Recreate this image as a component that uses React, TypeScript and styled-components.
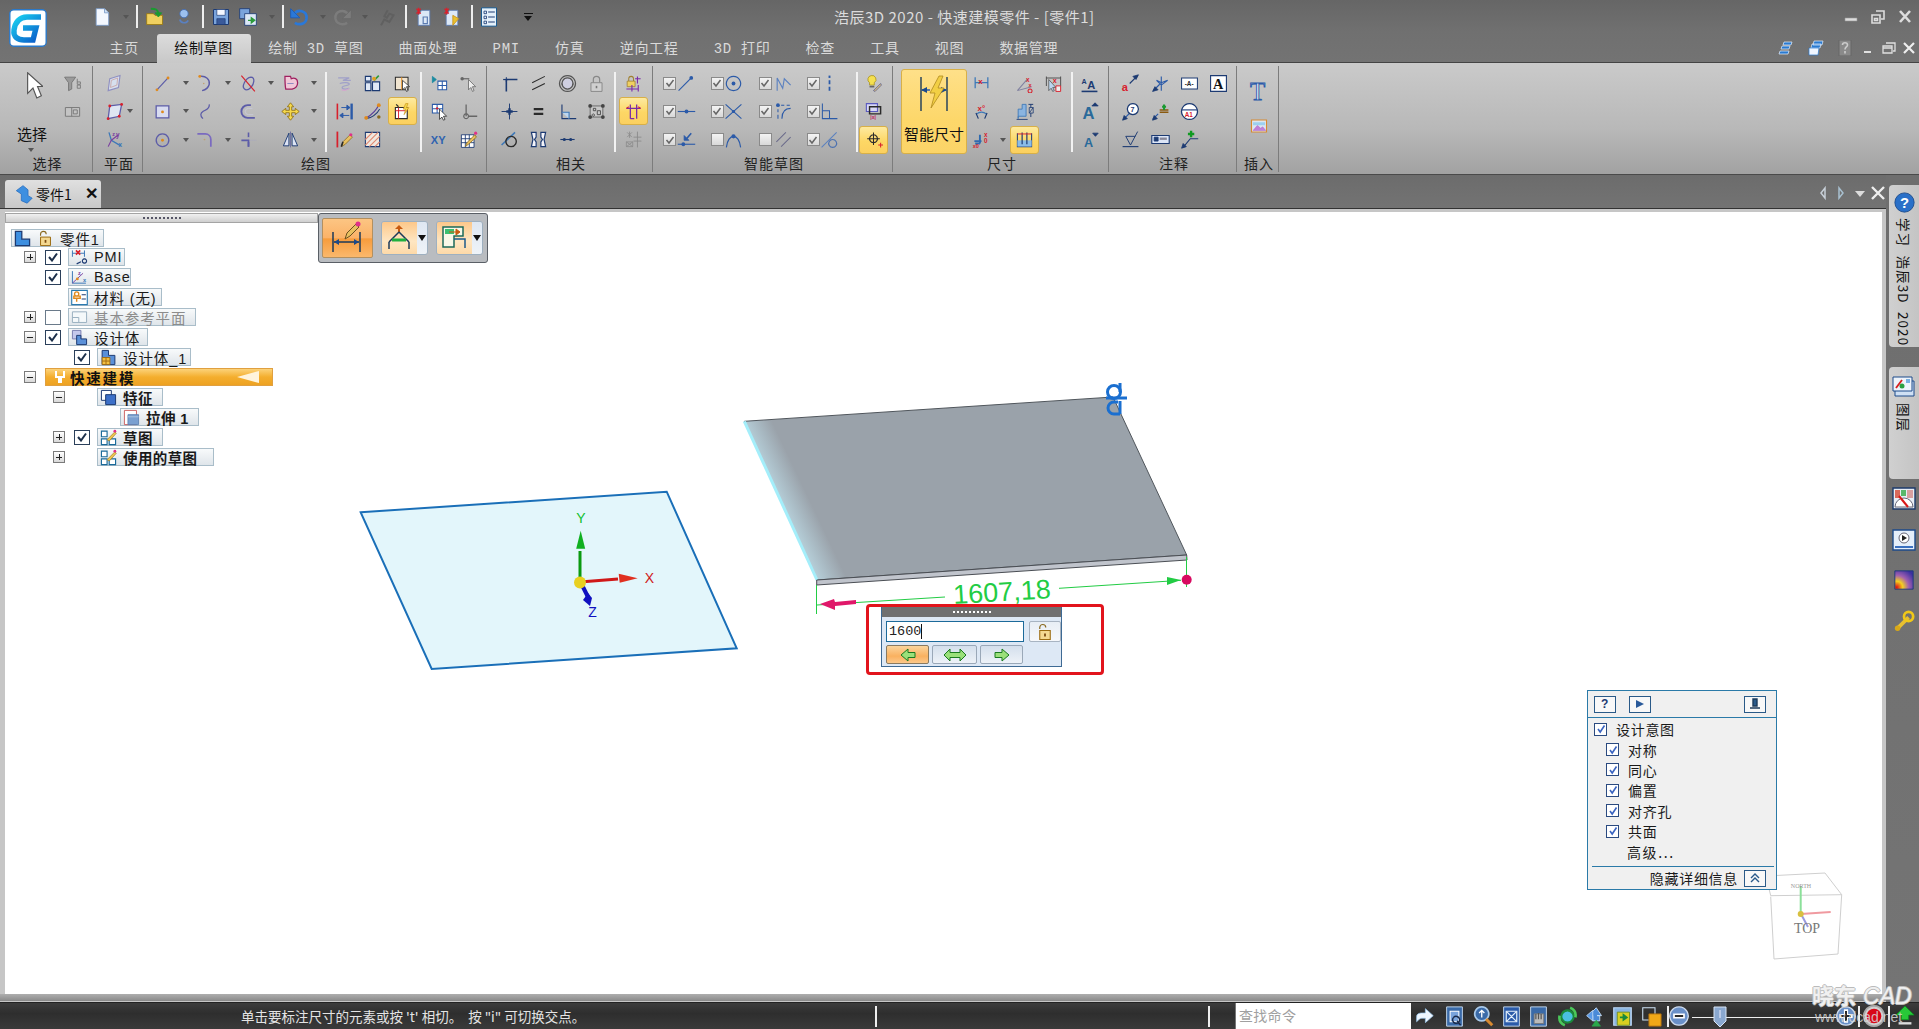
import React from 'react';
import styled, { createGlobalStyle } from 'styled-components';

const CJK = '"Noto Sans CJK SC", "Liberation Sans", sans-serif';
const B = '#2b5aa8', N = '#1c3a72', P = '#5c5ca8', O = '#e08a1e', R = '#d8202c', G = '#2f9a3a', K = '#2a2a2a', T = '#3d78b8';

const L = (d: string, c = P, w = 1.6, f = 'none') => <path d={d} stroke={c} strokeWidth={w} fill={f} />;
const Dot = (x: number, y: number, c = O, r = 1.8) => <circle cx={x} cy={y} r={r} fill={c} />;
const Tx = (x: number, y: number, s: string, c = R, z = 7) => (
  <text x={x} y={y} fontSize={z} fontFamily="Liberation Sans" fontWeight="700" fill={c}>{s}</text>
);

const icons: Record<string, React.ReactNode> = {
  filter: <>{L('M2 4h14l-5 7v8l-4 2V11z', '#777', 1.2, '#9a9a9a')}{L('M18 6v4M18 14h4v4h-4zM18 10h4v3h-4z', '#777', 1.1)}</>,
  selbox: <>{L('M3 7h18v11H3z', '#777', 1.2, '#c4c4c4')}{L('M11 7v11M13 10h5v5h-5z', '#777', 1.2)}</>,
  plane: <>{L('M6 6l13-4-2 15-13 4z', '#8f8fc0', 1.4, '#d6dfee')}{L('M8 8l8-3-1 9-8 3z', '#c9a0a0', 1, 'none')}</>,
  plane2: <>{L('M6 5l15-2-3 15-14 3z', P, 1.6, '#dfe6f2')}{Dot(6, 5, R, 1.8)}{Dot(21, 3, R, 1.8)}{Dot(18, 18, R, 1.8)}{Dot(4, 21, R, 1.8)}</>,
  csys: <>{L('M5 3l3 10 12 7', T, 1.6)}{L('M8 13l-4 8M8 13l9-7', '#7a3ea0', 1.4)}{Tx(14, 9, 'y', '#7a3ea0', 8)}{Tx(9, 8, 'z', '#7a3ea0', 7)}{Tx(17, 22, 'x', T, 8)}</>,
  line: <>{L('M5 20L19 5', P, 1.5)}{Dot(5, 20)}{Dot(19, 5)}</>,
  rect: <>{L('M4 5h16v15H4z', P, 1.6, '#d8dcf0')}{Dot(12, 12.5)}</>,
  circle: <>{L('M12 5a8 8 0 1 0 .01 0', P, 1.5)}{Dot(12, 13)}</>,
  arc: <>{L('M6 3c8-1 13 4 12 10-1 4-4 7-9 8', P, 1.8)}{Dot(6, 3)}{Dot(11, 12, '#c0a070', 1)}</>,
  spline: <>{L('M18 3c1 6-5 7-8 9s-4 5 0 9', P, 1.6)}</>,
  fillet: <>{L('M3 5h10c4 0 7 3 7 7v9', '#7a6ac0', 2.2)}{Dot(12, 12, '#c0a070', 1.1)}</>,
  trim: <>{L('M7 19c-4-3 1-14 8-15 6 0 4 9 0 13-3 3-6 4-8 2z', P, 1.6)}{L('M3 2l17 20', R, 1.5)}</>,
  offsetc: <>{L('M15 4H11a8 8 0 0 0 0 16h9', P, 2.4)}{L('M17 8h-5a4 4 0 0 0 0 8h6', '#c8c8d8', 1.2)}</>,
  extend: <>{L('M12 3v6M12 15v6', P, 2)}{L('M3 13h9v8', P, 2.2)}{L('M14 13h8M12 11v-2', '#aab', 1, 'none')}</>,
  heart: <>{L('M5 3h7l1 3c4-2 8 0 8 5 0 4-3 7-7 8H6c-1-5-1-11-1-16z', '#a02060', 1.6, '#f0c8d8')}{L('M8 12h8', '#8888c0', 1.2)}</>,
  move: <>{L('M12 1l4 5h-2.5v4.5H18V8l5 4-5 4v-2.5h-4.5V18H16l-4 5-4-5h2.5v-4.5H6V16l-5-4 5-4v2.5h4.5V6H8z', '#8a6a10', 1, '#f5d84a')}</>,
  mirror: <>{L('M10 4L3 20h7zM14 4l7 16h-7z', N, 1.2, '#dde4f4')}{L('M12 2v20', '#7070a0', 1.2)}</>,
  symm: <>{L('M4 5h14l-8 3h10M6 12c6-2 12-1 12 1s-9 1-9 4 7 2 9 1', '#a0a0c8', 1.5)}{L('M8 20c3 1 7 1 10-2', '#d8a0d0', 1.2)}</>,
  intel: <>{L('M3 3h7v6H3zM3 11h7v10H3zM12 10h9v11h-9z', N, 1.4, '#dfe8f6')}{L('M14 8l6-6', G, 2)}{Dot(14, 6, '#e0a020', 2.4)}</>,
  boxcur: <>{L('M3 4h16v16H3z', K, 1.3, '#f0e4d0')}{L('M11 4v16', O, 1.2)}{L('M12 8v12l3-3 2 5 2-1-2-5h4z', K, 1, '#fff')}</>,
  dist: <>{L('M3 2v20', R, 2)}{L('M21 2v20', B, 3)}{L('M8 7h7M15 4l4 3-4 3z', B, 1.2, B)}{L('M10 17h8M10 14l-4 3 4 3z', B, 1.2, B)}</>,
  curve: <>{L('M3 21C8 18 17 12 20 3', '#5a3e9a', 1.6)}{L('M4 21c6 0 14-6 17-12', N, 1.4)}{Dot(4, 20, O, 2.4)}{Dot(20, 4, O, 2.4)}{Dot(20, 19, '#8a6a20', 2.2)}</>,
  flash: <>{L('M3 7h15v14H3z', K, 1.4, '#fff')}{L('M7 7v14M3 11h15', R, 1.2)}{L('M16 2l-3 7h3l-2 7 6-9h-3l2-5z', '#c89018', .8, '#f5d84a')}{L('M4 3l3 3', K, 1.5)}</>,
  pencil: <>{L('M3 2v20', R, 2.2)}{L('M8 21l2-6 9-9 3 3-9 9z', '#8a6a20', 1, '#e8c060')}{Dot(20, 6, '#e0308a', 2)}{L('M8 21l2-6', K, 2)}</>,
  hatch: <>{L('M3 3h18v18H3z', N, 1.3, '#f0e8e0')}{L('M3 12l9-9M3 19L19 3M8 21L21 8M15 21l6-6', '#e08870', 1.4)}</>,
  gridtri: <>{L('M10 9h11v11H10zM15.5 9v11M10 14.5h11', B, 1.3, '#fff')}{L('M3 3l5 4-5 4z', '#1a8aa0', 1, '#1a8aa0')}</>,
  linkcur: <>{L('M3 6h10', '#666', 1.5)}{Dot(4, 6, '#666', 2.2)}{L('M12 7l0 13 3-3 2 5 2-1-2-5h4z', '#666', 1, '#eee')}</>,
  gridcur: <>{L('M3 3h13v11H3zM9 3v11M3 8.5h13', B, 1.3, '#fff')}{Dot(9, 8, R, 1.5)}{L('M12 9v13l3-3 2 4 2-1-2-4h4z', K, 1, '#fff')}</>,
  laxis: <>{L('M9 3v15M12 18h11', '#666', 1.6)}{L('M9 15a3 3 0 1 0 .01 0', '#666', 1.5)}</>,
  xy: <>{Tx(1, 18, 'XY', '#2f63b0', 14)}</>,
  tablep: <>{L('M3 6h16v16H3zM8 6v16M13 6v16M3 11h16M3 16h16', N, 1.1, '#fff')}{L('M8 21l2-5 10-10 2 3-10 9z', '#8a6a20', 1, '#e8c060')}{Dot(21, 4, '#e0308a', 2)}</>,
  corner: <>{L('M8 22V7h14', N, 2)}{L('M8 4v6', N, 1.2)}{L('M4 7h6', N, 1.5)}</>,
  cross: <>{L('M12 2v20M2 12h20', N, 1.2)}{L('M12 8v8M8 12h8', N, 3)}</>,
  parallel: <>{L('M4 11L20 3M4 20l16-8', K, 1.3)}</>,
  equal: <>{L('M6 9h12M6 15h12', K, 2.6)}</>,
  concentric: <>{L('M12 2a10 10 0 1 0 .01 0', '#555', 1.6)}{L('M12 5a7 7 0 1 0 .01 0', '#555', 1.6, '#cfcfe0')}</>,
  perp: <>{L('M5 3v18h18', N, 1.4)}{L('M5 13h9v8', T, 1.4, '#bcd6f0')}</>,
  lock: <>{L('M8 11V7a4 4 0 0 1 8 0v4', '#888', 1.5)}{L('M5 11h14v11H5z', '#888', 1.2, '#cfcfcf')}{L('M12 15v3', '#777', 2)}</>,
  rigid: <>{L('M4 5h16v14H4z', '#555', 1, '#c8c8c8')}{Dot(4, 5, '#444', 2.4)}{Dot(20, 5, '#444', 2.4)}{Dot(4, 19, '#444', 2.4)}{Dot(20, 19, '#444', 2.4)}{L('M8 8h3v3H8zM13 11h4v5h-4zM8 15a1.5 1.5 0 1 0 .01 0', '#444', 1.1)}</>,
  tangent: <>{L('M2 19L19 3', T, 2)}{L('M14 8a6.5 6.5 0 1 0 .01 0', K, 1.7)}</>,
  symbr: <>{L('M3 3h6v6l-2 3 2 3v6H3l2-9zM21 3h-6v6l2 3-2 3v6h6l-2-9z', N, 1.5, '#f4f4fa')}</>,
  collin: <>{L('M3 12h18', N, 1.4)}{Dot(8, 12, N, 2)}{Dot(16, 12, N, 2)}</>,
  lockdim: <>{L('M6 9V6a3 3 0 0 1 6 0v3', '#a08030', 1.3)}{L('M4 9h10v7H4z', '#a08030', 1, '#f0d060')}{L('M14 6h7M17 3v9M3 19h15M10 14v8M18 14v8', '#7a2aa8', 1.4)}</>,
  dimrel: <>{L('M3 8h18M8 3v10M16 3v10M8 13v8M8 21h5M16 13v8', '#7a2aa8', 1.6)}{L('M3 8l3-2M21 8l-3-2', R, 1.3)}</>,
  faint: <>{L('M17 2v20M12 9h10M12 14h10', '#8a8a8a', 1.1)}{L('M4 3l6 6M10 3L4 9M7 2v8M3 15h8v6H3zM3 15l8 6M11 15l-8 6', '#8a8a8a', 1)}</>,
  sline: <>{L('M2 21L18 5', B, 1.4)}{Dot(18, 5, B, 2.4)}</>,
  sdot: <>{L('M12 3a9 9 0 1 0 .01 0', B, 1.5)}{Dot(12, 12, B, 2.4)}</>,
  swave: <>{L('M4 21V5l7 13 2-12 8 8', '#5a80c0', 1.4)}</>,
  sbar: <>{L('M12 2v3', B, 2.4)}{L('M12 8v5M12 16v5', B, 2.2)}</>,
  smid: <>{L('M1 12h22', B, 1.4)}{Dot(12, 12, B, 2.4)}</>,
  sx: <>{L('M2 3l20 18M22 3L2 21', B, 1.4)}{Dot(12, 12, B, 2)}</>,
  sarc: <>{Dot(5, 4, B, 2.4)}{L('M9 4h4M16 4h4M5 9v4M5 16v5', B, 1.3)}{L('M21 8c-7 0-11 5-11 13', B, 1.4)}</>,
  sl: <>{L('M3 2v19h19', B, 1.3)}{L('M3 11h9v10', B, 1.3)}</>,
  sdown: <>{L('M1 18h22', B, 1.4)}{Dot(8, 18, B, 2.4)}{L('M18 4l-6 7', B, 2)}{L('M9 7v6h6z', B, 1, B)}</>,
  sup: <>{L('M3 22c1-9 5-14 9-14s8 5 9 14', B, 1.5)}{Dot(12, 8, B, 2.6)}</>,
  spar: <>{L('M3 15L15 3M9 21L21 9', '#6a6a8a', 1.3)}</>,
  scirc: <>{L('M2 22L21 3', '#5a80c0', 1.3)}{L('M16 12a5 5 0 1 0 .01 0', '#4a70b0', 1.4)}</>,
  bulb: <>{L('M9 2a5 5 0 0 1 4 9v3H7v-3A5 5 0 0 1 9 2z', '#a89020', 1, '#f5e050')}{L('M7 16h6', '#666', 2)}{L('M12 21l9-9 1 2-8 8z', '#5a5a8a', 1, '#d8c080')}</>,
  relbox: <>{L('M3 2h14v10H3z', '#5a5ac0', 1.4, '#d8d8f4')}{L('M7 6h14v9H7z', K, 1.8)}{Tx(8, 22, '|x|', '#c02060', 6.5)}</>,
  cross2: <>{L('M12 3v16M4 11h16', K, 1.3)}{L('M12 6a5 5 0 1 0 .01 0', K, 1.5)}{L('M18 19h6M21 16v6', R, 1.3)}</>,
  dimx: <>{L('M4 4v14M20 4v14M4 11h16', T, 1.6)}{Tx(8, 12, 'x', R, 10)}</>,
  dimrr: <>{L('M3 21l18-5M3 21l12-14', '#8080a0', 1.3)}{Tx(14, 10, 'x', R, 8)}{Tx(17, 16, 'x', R, 7)}{L('M19 19a2.5 2.5 0 1 0 .01 0', R, 1.3)}</>,
  dimcur: <>{L('M3 5h18M3 3v12M21 3v12', '#555', 1.3)}{Tx(11, 11, 'x', R, 9)}{L('M6 7v14l3-3 2 4 2-1-2-4h4z', '#555', 1, '#bcd6f0')}{L('M15 15h6v7h-6z', R, 1.2, '#eee')}</>,
  angle: <>{L('M6 15a9 9 0 0 1 12 0', T, 1.6)}{L('M5 14l3 7M19 14l-3 7', N, 1.5)}{Tx(7, 11, 'x°', R, 10)}</>,
  step: <>{L('M4 21V9h5V3h5v15H4z', T, 1.1, '#8ab4e0')}{L('M17 3h6M20 3v4M20 14v5', N, 1.2)}{L('M18 7h5v7h-5zM18 14l5-7', N, 1)}{L('M2 22h14', N, 1.1)}</>,
  axial: <>{L('M3 14h9M10 6v11M10 17h-6', '#2f6ab0', 2.4)}{Tx(15, 9, 'x', R, 8)}{Tx(15, 17, '0', R, 8)}{Tx(1, 23, 'x0', R, 7)}</>,
  water: <>{L('M3 4v17h18V4', N, 1.3)}{L('M3 13h18v8H3z', 'none', 0, '#8abce8')}{L('M9 3v15M15 3v15', N, 1.5)}{L('M3 5h18', R, 1.2)}</>,
  textu: <>{Tx(2, 12, 'A', N, 9)}{Tx(9, 19, 'A', N, 14)}{L('M2 22h20', N, 2)}</>,
  aup: <>{Tx(3, 22, 'A', '#2a6a9a', 21)}{L('M19 1l4 4h-8z', N, 1, N)}</>,
  adown: <>{Tx(5, 22, 'A', '#2a6a9a', 16)}{L('M16 4h7l-3.5 4z', N, 1, N)}</>,
  anote: <>{Tx(1, 21, 'a', R, 14)}{L('M11 12l10-10', N, 1.4)}{L('M22 1l-7 2 4 4z', N, 1, N)}</>,
  arrowT: <>{L('M3 21l8-8', B, 1.6)}{L('M2 22l7-2-4-4z', N, 1, N)}{L('M13 3v18M7 8l6 3 8-3-8 6z', B, 1.4)}</>,
  boxA: <>{L('M2 5h20v14H2z', N, 1.3, '#fff')}{Tx(6, 15, '-A-', K, 8)}</>,
  bigA: <>{L('M2 2h20v20H2z', N, 1.4, '#fff')}<text x="5" y="19" fontSize="18" fontFamily="Liberation Serif" fontWeight="700" fill="#111">A</text></>,
  bal: <>{L('M3 22l8-8', B, 1.6)}{L('M2 23l6-2-4-4z', N, 1, N)}{L('M15 2a7 7 0 1 0 .01 0', N, 1.5, '#fff')}{Tx(12, 13, '7', N, 9)}</>,
  datum: <>{L('M2 22l7-7', B, 1.6)}{L('M2 23l6-2-4-4z', N, 1, N)}{L('M11 13h11M11 10h11', '#8a5a10', 2)}{L('M14 6h5M16.5 3v7', '#1a9a30', 2.6)}</>,
  a1: <>{L('M12 2a10 10 0 1 0 .01 0', N, 1.6, '#fff')}{L('M2 10h20', '#1a3a7a', 1.4)}{Tx(6, 19, 'A1', R, 8)}</>,
  finish: <>{L('M2 21h20', N, 1.4)}{L('M6 8l6 11 9-17M6 8h12', N, 1.2)}</>,
  frame: <>{L('M1 7h22v10H1z', N, 1.4, '#dce6f8')}{L('M4 9h5v5H4z', N, 1, N)}{L('M11 11h9', '#889', 3)}</>,
  leader: <>{L('M4 22L13 11h10', N, 1.4)}{L('M2 23l6-2-4-4z', N, 1, N)}{L('M10 5h8M14 1v8', '#0f9a20', 3)}</>,
  bigT: <><text x="3" y="22" fontSize="25" fontFamily="Liberation Serif" fill="#dce8f6" stroke="#2b5aa8" strokeWidth=".9">T</text></>,
  picture: <>{L('M2 4h20v16H2z', '#d88a30', 1.5, '#dce6f0')}{L('M4 18l6-7 4 4 3-2 4 5z', '#a050c0', .5, '#c080d8')}{L('M4 7h16v4H4z', 'none', 0, '#9cd0f0')}</>,
  qnew: <>{L('M5 2h10l5 5v15H5z', '#7a9ac8', 1, '#f4f8ff')}{L('M15 2v5h5', '#7a9ac8', 1, '#cfe0f4')}</>,
  qopen: <>{L('M2 8h8l2 2h9v11H2z', '#9a7a10', 1, '#f0d060')}{L('M7 2c6 0 9 1 9 7', '#1a9a30', 2.4)}{L('M12 7l4 5 4-5z', '#1a9a30', 1, '#1a9a30')}</>,
  qfind: <>{L('M12 3a5 5 0 1 0 .01 0', '#4a70b0', 1.2, '#9cc0ee')}{L('M7 15c1 5 8 5 10 1', '#5a80c0', 2)}</>,
  qsave: <>{L('M3 3h18v18H3z', N, 1.2, '#7aa4dc')}{L('M7 3h10v7H7z', N, .8, '#f4f8ff')}{L('M7 14h10v7H7z', N, .8, '#3a5a9a')}</>,
  qsaves: <>{L('M2 2h12v12H2z', N, 1, '#7aa4dc')}{L('M8 8h14v14H8z', N, 1, '#dce8f6')}{L('M12 16h6M16 13l4 3-4 3z', '#2a9a3a', 1.6, '#2a9a3a')}</>,
  qundo: <>{L('M6 9c4-7 16-5 15 5-1 7-9 8-14 5', '#2a78d8', 3.2)}{L('M2 2v11h11z', '#1a5ab8', 1, '#2a78d8')}</>,
  qredo: <>{L('M18 9C14 2 2 4 3 14c1 7 9 8 14 5', '#7c7c7c', 3)}{L('M22 3v11H11z', '#686868', 1, '#7c7c7c')}</>,
  qsteps: <>{L('M6 22l4-7 6 3 5-8-5-2-3 5-3-2 4-7', '#606060', 2.4)}</>,
  qa: <>{L('M9 4h10v18H5V10z', '#5a7ab0', 1, '#dce8f6')}{L('M3 2l5 6M8 2l-5 6M5.5 1v8', R, 1.6)}{L('M11 12h5v8h-5z', '#5a7ab0', 1.4)}</>,
  qb: <>{L('M9 4h10v18H5V10z', '#5a7ab0', 1, '#dce8f6')}{L('M3 2l5 6M8 2l-5 6M5.5 1v8', R, 1.6)}{L('M13 10l7 4-7 8z', '#c89018', 1, '#e8c030')}</>,
  qlist: <>{L('M3 1h18v22H3z', '#1a5a90', 1.2, '#e4f0fa')}{L('M6 5h3v3H6zM6 11h3v3H6zM6 17h3v3H6z', N, 1)}{L('M11 6h8M11 12h8M11 18h8', N, 1.4)}</>,
  stArrow: <>{L('M3 12c0-3 3-4 6-4h4V3l9 8-9 8v-5H9c-2 0-4 2-6 4z', '#9ac8f0', .8, '#eef6ff')}</>,
  stFit: <>{L('M3 1h18v22H3z', '#cfe4f8', 1, '#3a6aa8')}{L('M7 6h10v12H7z', '#fff', 1.2, '#7aa4dc')}{L('M11 13a4 4 0 1 0 .01-.01M15 17l4 5', '#1a2a4a', 1.6)}</>,
  stZoom: <>{L('M10 1a8 8 0 1 0 .01 0', '#a8c8e8', 2, '#3a6aa8')}{L('M15 15l7 7', '#d88a30', 3.4)}{L('M10 5v8M7 8l3-3 3 3', '#fff', 1.5)}</>,
  stArea: <>{L('M3 1h18v22H3z', '#cfe4f8', 1, '#2a5aa8')}{L('M7 7l10 10M17 7L7 17M6 6h12v12H6z', '#e4f0fa', 1.4)}</>,
  stPan: <>{L('M3 1h18v22H3z', '#cfe4f8', 1, '#3a6aa8')}{L('M7 9h11v11H7z', '#777', 1, '#bbb')}{L('M9 9v6M12 8v7M15 9v6', '#555', 1.4)}</>,
  stOrbit: <>{L('M12 5a7 7 0 1 0 .01 0', '#1a8a3a', 2.4, '#4ac0e0')}{L('M15 2c5 2 7 6 6 11M9 22C4 20 2 16 3 11', '#4ac85a', 3)}</>,
  stView: <>{L('M14 2L5 11h5v6h8v-6h-3l5 0z', '#c8e0f8', 1, '#4a8ad8')}{L('M3 11l7-6v12z', '#bcd6f4', 1, '#5a9ae8')}{L('M14 16l5 7h-10z', '#2aa84a', .6, '#2aa84a')}</>,
  stLayer: <>{L('M2 2h20v20H2z', '#bcd6f4', 1.4, '#8ab4e0')}{L('M6 7h14v15H6z', '#6a8a20', 1, '#d8d020')}{L('M9 13h6M13 10l4 3-4 3z', '#1a8a3a', 1.8, '#1a8a3a')}</>,
  stColor: <>{L('M2 2h14v14H2z', '#cfe4f8', 1.2, 'none')}{L('M9 9h14v14H9z', '#a86a10', 1, '#f0a818')}</>,
  stMinus: <>{L('M12 1a11 11 0 1 0 .01 0', '#cfdcee', 1.6, '#6a90c8')}{L('M5 9h14v6H5z', '#fff', 0, '#fff')}{L('M7 12h10', K, 2.4)}</>,
  stPlus: <>{L('M12 1a11 11 0 1 0 .01 0', '#cfdcee', 1.6, '#6a90c8')}{L('M12 4v16M4 12h16', '#fff', 5)}{L('M12 6v12M6 12h12', K, 2.4)}</>,
  stRec: <>{L('M12 1a11 11 0 1 0 .01 0', '#a8a8a8', 2, '#d0d0d0')}<circle cx="12" cy="12" r="8" fill="#d80818" /></>,
  stUp: <>{L('M12 1L2 11h6v5h8v-5h6z', '#0a8a20', .8, '#28c838')}{L('M5 20h14', '#ddd', 2.6)}</>,
  tPart: <>{L('M2 2h9v11h11v9H2z', N, 1.8, '#3d8fe0')}</>,
  tLock: <>{L('M5 8V6a4 4 0 0 1 8 0', '#8a6a20', 1.6)}{L('M5 10h14v12H5z', '#9a6a10', 1.4, '#f4d890')}{L('M12 14v4', '#7a4a10', 2.4)}</>,
  tPmi: <>{L('M2 2v9M19 2v9M2 6h17', T, 1.4)}{L('M7 2l6 6M13 2L7 8', R, 2.4)}{L('M19 14a3 3 0 1 0 .01 0M14 18l-6 3', N, 1.6)}</>,
  tBase: <>{L('M2 3v17h19', T, 1.4)}{L('M2 20l15-14', '#7a3ea0', 1.3)}{Tx(10, 8, 'z', '#7a3ea0', 8)}{Tx(17, 18, 'x', T, 8)}{Dot(9, 14, O, 2)}</>,
  tMat: <>{L('M1 2h22v20H1z', '#2a7ab0', 1.6, '#fff')}{L('M8 4a3 3 0 1 0 .01 0M4 10h9v3H4zM8 13v5', O, 2)}{L('M15 8h6M15 14h6', N, 1.5)}</>,
  tRef: <>{L('M2 4h20v15H2z', '#9ab0c0', 1.4, '#f4f8fa')}{L('M2 12h9v7', '#9ab0c0', 1.4)}</>,
  tBody: <>{L('M2 2h12v12H2z', '#7a80b0', 1.4, '#c4c8ec')}{L('M8 9h6v5h8v8H8z', N, 1.4, '#5a90d8')}</>,
  tBody1: <>{L('M3 2h9v7h9v13H3z', N, 1.4, '#5a90d8')}{L('M3 12h11v10H3zM8.5 12v10M3 17h11', '#a06a10', 1.3, '#f4c040')}</>,
  tFeat: <>{L('M2 2h14v14H2z', N, 1.4, '#fff')}{L('M8 8h14v14H8z', N, 1.4, '#3d70c8')}</>,
  tExt: <>{L('M2 2h17v20H2z', '#c85a5a', 1.3, '#fff')}{L('M7 8h15v14H7z', '#5a80b0', 1.2, '#7aa0d0')}{L('M7 11h15', '#aac4e0', 1.4)}</>,
  tSketch: <>{L('M2 3h8v8H2zM2 14h8v8H2zM13 14h9v8h-9z', '#1a6a9a', 1.6, '#fff')}{L('M10 15L21 4l2 2-10 11z', '#a07a20', 1, '#f0c850')}{Dot(21, 3, '#e0308a', 2)}</>,
};

const Svg = styled.svg<{ $s: number }>`
  width: ${p => p.$s}px;
  height: ${p => p.$s}px;
  flex: none;
  display: block;
`;

const Ic = ({ n, s = 20 }: { n: string; s?: number }) => (
  <Svg $s={s} viewBox="0 0 24 24" aria-hidden>{icons[n]}</Svg>
);

const Global = createGlobalStyle`
  html, body { margin: 0; padding: 0; background: #707070; }
  body { font-family: ${CJK}; overflow: hidden; }
  * { box-sizing: border-box; }
`;

const Page = styled.div`
  width: 1919px;
  height: 1029px;
  display: flex;
  flex-direction: column;
  overflow: hidden;
  position: relative;
`;

/* ---------- header ---------- */
const Header = styled.header`
  height: 63px;
  flex: none;
  display: flex;
  background: linear-gradient(#666 0%, #707070 50%, #737373 100%);
  border-bottom: 1px solid #444;
`;
const LogoCell = styled.div`
  width: 91px;
  padding: 9px 0 0 9px;
  flex: none;
`;
const LogoSvg = styled.svg`
  width: 38px;
  height: 38px;
  display: block;
`;
const HeaderMain = styled.div`
  flex: 1;
  min-width: 0;
  display: flex;
  flex-direction: column;
`;
const TopRow = styled.div`
  height: 33px;
  display: flex;
  align-items: center;
`;
const Qat = styled.div`
  width: 743px;
  flex: none;
  display: flex;
  align-items: center;
`;
const Slot = styled.div<{ $ml: number; $w: number }>`
  margin-left: ${p => p.$ml}px;
  width: ${p => p.$w}px;
  flex: none;
  display: flex;
  justify-content: center;
  align-items: center;
`;
const QatSep = styled.div`
  width: 2px;
  height: 23px;
  background: #eee;
`;
const MiniArrow = styled.span<{ $c?: string }>`
  width: 0;
  height: 0;
  border-left: 3.5px solid transparent;
  border-right: 3.5px solid transparent;
  border-top: 4px solid ${p => p.$c ?? '#555'};
`;
const CustomizeArrow = styled.span`
  width: 9px;
  height: 8px;
  border-top: 1.5px solid #111;
  position: relative;
  &::after {
    content: '';
    position: absolute;
    left: 0;
    top: 2px;
    border-left: 4.5px solid transparent;
    border-right: 4.5px solid transparent;
    border-top: 5px solid #111;
  }
`;
const Title = styled.div`
  font-size: 15px;
  color: #dcdcdc;
  white-space: nowrap;
  letter-spacing: .5px;
`;
const WinButtons = styled.div`
  margin-left: auto;
  display: flex;
  align-items: center;
  gap: 11px;
  padding-right: 6px;
`;
const WinSvg = styled.svg`
  width: 16px;
  height: 16px;
  display: block;
`;
const TabRow = styled.div`
  height: 29px;
  display: flex;
  align-items: flex-end;
  padding-left: 1px;
`;
const Tab = styled.div<{ $on?: boolean }>`
  padding: 0 17.6px;
  margin-bottom: ${p => (p.$on ? '-1px' : '0')};
  position: relative;
  font-family: "Liberation Mono", ${CJK};
  font-size: 14px;
  letter-spacing: .7px;
  line-height: 31px;
  white-space: pre;
  color: ${p => (p.$on ? '#111' : '#dadada')};
  background: ${p => (p.$on ? 'linear-gradient(#dcdcdc, #c8c8c8)' : 'none')};
  border-radius: ${p => (p.$on ? '3px 3px 0 0' : '0')};
  height: ${p => (p.$on ? '29px' : '28px')};
`;
const DocButtons = styled.div`
  margin-left: auto;
  width: 145px;
  height: 28px;
  display: flex;
  align-items: center;
`;

/* ---------- ribbon ---------- */
const Ribbon = styled.div`
  height: 112px;
  flex: none;
  display: flex;
  background: linear-gradient(#cacaca 0%, #b8b8b8 60%, #a2a2a2 100%);
  border-bottom: 1px solid #4a4a4a;
`;
const Group = styled.section<{ $w: number }>`
  width: ${p => p.$w}px;
  flex: none;
  display: flex;
  flex-direction: column;
  position: relative;
  &::after {
    content: '';
    position: absolute;
    right: 0;
    top: 3px;
    bottom: 2px;
    width: 1px;
    background: #7c7c7c;
  }
`;
const GroupBody = styled.div`
  height: 91px;
  padding-top: 6px;
  display: flex;
`;
const GroupLabel = styled.div`
  flex: 1;
  text-align: center;
  font-size: 14px;
  letter-spacing: 1px;
  padding-left: 2px;
  color: #222;
  line-height: 19px;
`;
const Col = styled.div<{ $ml: number; $w: number }>`
  margin-left: ${p => p.$ml}px;
  width: ${p => p.$w}px;
  flex: none;
  display: flex;
  flex-direction: column;
  align-items: center;
`;
const Cell = styled.div`
  height: 29px;
  width: 100%;
  display: flex;
  align-items: center;
  justify-content: center;
`;
const Hi = styled.div`
  width: 29px;
  height: 28px;
  flex: none;
  display: flex;
  align-items: center;
  justify-content: center;
  border-radius: 3px;
  border: 1px solid #d8b048;
  background: linear-gradient(#fdeaa0, #fdd765 55%, #fbd060);
`;
const RibbonSep = styled.div`
  width: 2px;
  height: 80px;
  margin-top: 3px;
  background: #f2f2f2;
`;
const Check = styled.div`
  width: 13px;
  height: 13px;
  border: 1px solid #8a8a8a;
  background: linear-gradient(#f4f4f4, #d8d8d8);
  display: flex;
  align-items: center;
  justify-content: center;
`;
const CheckSvg = styled.svg`
  width: 10px;
  height: 10px;
  display: block;
`;
const SelectCol = styled.div`
  display: flex;
  flex-direction: column;
  align-items: center;
  width: 100%;
`;
const CursorSvg = styled.svg`
  width: 17px;
  height: 29px;
  margin-top: 3px;
  display: block;
`;
const SelectText = styled.div`
  margin-top: 23px;
  margin-left: -4px;
  font-size: 15px;
  line-height: 20px;
  color: #111;
`;
const SelectCaret = styled.div`
  margin-top: 4px;
  margin-left: -6px;
  display: flex;
`;
const BigBtn = styled.div`
  width: 66px;
  height: 87px;
  border-radius: 3px;
  border: 1px solid #d8b048;
  background: linear-gradient(#fee089, #fdd76a 60%, #fbd468);
  display: flex;
  flex-direction: column;
  align-items: center;
  font-size: 15px;
  color: #111;
  white-space: nowrap;
`;
const BigSvg = styled.svg`
  width: 40px;
  height: 36px;
  margin-top: 5px;
  margin-bottom: 12px;
  display: block;
`;
const InsertCol = styled.div`
  display: flex;
  flex-direction: column;
  align-items: center;
  gap: 15px;
  padding-top: 9px;
`;

/* ---------- middle ---------- */
const Middle = styled.div`
  flex: 1;
  min-height: 0;
  display: flex;
`;
const Work = styled.div`
  width: 1886px;
  flex: none;
  display: flex;
  flex-direction: column;
`;
const DocStrip = styled.div`
  height: 34px;
  flex: none;
  display: flex;
  align-items: flex-end;
  padding-left: 5px;
  background: linear-gradient(#6c6c6c, #737373);
  border-bottom: 1px solid #333;
`;
const DocTab = styled.div`
  width: 96px;
  height: 28px;
  display: flex;
  align-items: center;
  gap: 3px;
  padding-left: 8px;
  background: linear-gradient(#e0e0e0, #c8c8c8);
  border-radius: 3px 3px 0 0;
  font-size: 14px;
  color: #111;
`;
const DocClose = styled.span`
  margin-left: 10px;
  font-family: "Liberation Sans", sans-serif;
  font-weight: 700;
  font-size: 16px;
  line-height: 1;
`;
const DocRight = styled.div`
  margin-left: auto;
  height: 100%;
  display: flex;
  align-items: center;
  padding-top: 2px;
  gap: 2.5px;
`;
const Frame = styled.div`
  flex: 1;
  min-height: 0;
  display: flex;
  background: #c6c6c6;
  padding: 3px 4px 0 5px;
`;
const Canvas = styled.main`
  width: 1877px;
  height: 782px;
  background: #fff;
  position: relative;
  flex: none;
`;
const Scene = styled.svg`
  position: absolute;
  left: 0;
  top: 0;
  width: 1877px;
  height: 782px;
`;
const BottomEdge = styled.div`
  position: absolute;
  left: -5px;
  top: 782px;
  width: 1886px;
  height: 7px;
  background: linear-gradient(#aeaeae, #8a8a8a);
`;

/* tree */
const TreePane = styled.div`
  position: relative;
  width: 313px;
`;
const Grip = styled.div`
  height: 10px;
  margin-top: 1px;
  background: linear-gradient(#f0f0f0, #cfcfcf);
  border: 1px solid #a4a4a4;
  display: flex;
  justify-content: center;
  align-items: center;
`;
const GripDots = styled.span`
  width: 38px;
  height: 2px;
  background: repeating-linear-gradient(90deg, #556 0 2px, transparent 2px 4px);
`;
const TreeList = styled.div`
  padding-top: 6px;
  display: flex;
  flex-direction: column;
`;
const Row = styled.div<{ $x: number; $top?: boolean }>`
  height: ${p => (p.$top ? 18 : 20)}px;
  padding-left: ${p => p.$x}px;
  display: flex;
  align-items: center;
`;
const ExpSlot = styled.div`
  width: 21px;
  flex: none;
`;
const ChkSlot = styled.div`
  width: 23px;
  flex: none;
`;
const Expander = styled.div`
  width: 12px;
  height: 12px;
  border: 1px solid #7a7a7a;
  background: linear-gradient(#fff, #d8d8d8);
  position: relative;
  &::before {
    content: '';
    position: absolute;
    left: 2px;
    right: 2px;
    top: 4.5px;
    height: 1px;
    background: #222;
  }
`;
const Plus = styled(Expander)`
  &::after {
    content: '';
    position: absolute;
    top: 2px;
    bottom: 2px;
    left: 4.5px;
    width: 1px;
    background: #222;
  }
`;
const TreeCheck = styled.div<{ $empty?: boolean }>`
  width: 16px;
  height: 15px;
  border: 1px solid ${p => (p.$empty ? '#6a7a8a' : '#2a3f5a')};
  background: #fff;
  display: flex;
  align-items: center;
  justify-content: center;
`;
const Chip = styled.div<{ $w: number; $bold?: boolean; $dim?: boolean }>`
  width: ${p => p.$w}px;
  height: 18px;
  display: flex;
  align-items: center;
  gap: 6px;
  padding-left: 2px;
  background: linear-gradient(#f8fafb, #dfe5ea);
  border: 1px solid #a9bdc9;
  font-size: 14.5px;
  letter-spacing: ${p => (p.$bold ? '.4px' : '.9px')};
  font-weight: ${p => (p.$bold ? 700 : 400)};
  color: ${p => (p.$dim ? '#8c8c8c' : '#1a1a1a')};
  white-space: nowrap;
  font-family: "Liberation Sans", "Noto Sans CJK SC", sans-serif;
`;
const SyncBar = styled.div`
  width: 228px;
  height: 18px;
  margin-left: 0;
  display: flex;
  align-items: center;
  padding-left: 7px;
  background: linear-gradient(#fcd27a, #f4ae2e 50%, #eda222);
  border: 1px solid #e0a040;
  font-size: 14.5px;
  font-weight: 700;
  letter-spacing: 1.8px;
  color: #111;
  gap: 3px;
`;
const SyncEnd = styled.svg`
  width: 24px;
  height: 14px;
  margin-left: auto;
  margin-right: 12px;
`;

/* command bar */
const CommandBar = styled.div`
  position: absolute;
  left: 313px;
  top: 1px;
  width: 170px;
  height: 50px;
  display: flex;
  align-items: center;
  padding: 0 4px 0 3px;
  gap: 8px;
  background: #b9bcc0;
  border: 1px solid #5a5f66;
  border-radius: 3px;
`;
const CmdMain = styled.div`
  width: 52px;
  height: 40px;
  display: flex;
  align-items: center;
  justify-content: center;
  background: linear-gradient(#fcc583, #fbb268 50%, #f79c3c 52%, #fbb86c);
  border: 1px solid #b39060;
  border-radius: 2px;
`;
const CmdSplit = styled.div`
  width: 48px;
  height: 34px;
  display: flex;
  border: 1px solid #9eb0c0;
  border-radius: 3px;
  overflow: hidden;
`;
const CmdFace = styled.div`
  width: 35px;
  display: flex;
  align-items: center;
  justify-content: center;
  background: linear-gradient(#fdc88a, #fee6c2 60%, #fdd9a8);
`;
const CmdDrop = styled.div`
  flex: 1;
  display: flex;
  align-items: center;
  justify-content: center;
  background: linear-gradient(#dee7f2, #eef3f8);
`;
const DropTri = styled.span`
  border-left: 4.5px solid transparent;
  border-right: 4.5px solid transparent;
  border-top: 6px solid #111;
`;

/* dimension popup */
const RedBox = styled.div`
  position: absolute;
  left: 861px;
  top: 392px;
  width: 238px;
  height: 71px;
  border: 3.5px solid #e2141c;
  border-radius: 4px;
`;
const Popup = styled.div`
  position: absolute;
  left: 876px;
  top: 395px;
  width: 181px;
  height: 60px;
  background: #dde8f5;
  border: 1px solid #3e6a94;
  border-top: 0;
`;
const PopHead = styled.div`
  height: 10px;
  background: #707070;
  display: flex;
  align-items: center;
  justify-content: center;
`;
const PopDots = styled.span`
  width: 38px;
  height: 2px;
  background: repeating-linear-gradient(90deg, #fff 0 2px, transparent 2px 4px);
`;
const PopRow = styled.div`
  display: flex;
  gap: 5px;
  padding: 4px 0 0 4px;
`;
const PopInput = styled.div`
  width: 138px;
  height: 21px;
  background: #fff;
  border: 1px solid #1c6a9a;
  font-family: "Liberation Mono", monospace;
  font-size: 13.5px;
  padding-left: 2px;
  color: #222;
  display: flex;
  align-items: center;
`;
const Caret = styled.span`
  width: 1px;
  height: 15px;
  background: #111;
`;
const LockBtn = styled.div`
  width: 32px;
  height: 21px;
  display: flex;
  align-items: center;
  justify-content: center;
  border: 1px solid #a8b4c2;
  border-radius: 2px;
  background: linear-gradient(#e8eef5, #f6f8fb);
`;
const ArrowRow = styled.div`
  display: flex;
  gap: 3px;
  padding: 3px 0 0 4px;
`;
const ArrowBtn = styled.div<{ $w: number; $on?: boolean }>`
  width: ${p => p.$w}px;
  height: 19px;
  display: flex;
  align-items: center;
  justify-content: center;
  border: 1px solid ${p => (p.$on ? '#8a7a60' : '#9aa8b8')};
  border-radius: 2px;
  background: ${p => (p.$on ? 'linear-gradient(#fbd49c, #f9b160 60%, #fcc88a)' : 'linear-gradient(#d4dfec, #edf2f8)')};
`;
const ArrowSvg = styled.svg<{ $w: number }>`
  width: ${p => p.$w}px;
  height: 14px;
  display: block;
`;

/* intent panel */
const Intent = styled.aside`
  position: absolute;
  left: 1582px;
  top: 478px;
  width: 190px;
  height: 200px;
  background: #f0f0f0;
  border: 1px solid #2a7aa8;
  font-size: 14px;
  letter-spacing: .7px;
  color: #1a1a1a;
  display: flex;
  flex-direction: column;
`;
const IntentHead = styled.div`
  height: 27px;
  flex: none;
  display: flex;
  align-items: center;
  gap: 13px;
  padding: 0 10px 0 6px;
  border-bottom: 1px solid #2a7aa8;
`;
const IntentBtn = styled.div<{ $right?: boolean }>`
  width: 22px;
  height: 17px;
  margin-left: ${p => (p.$right ? 'auto' : '0')};
  border: 1px solid #2a5a88;
  background: #f8f8f8;
  display: flex;
  align-items: center;
  justify-content: center;
  color: #1c3a72;
  font: 700 12px "Liberation Sans", sans-serif;
`;
const IntentBody = styled.div`
  padding-top: 1px;
  display: flex;
  flex-direction: column;
`;
const IntentRow = styled.div<{ $x: number; $gap: number }>`
  height: 20.4px;
  display: flex;
  align-items: center;
  padding-left: ${p => p.$x}px;
  gap: ${p => p.$gap}px;
  white-space: nowrap;
`;
const IntentChk = styled.div`
  width: 13px;
  height: 13px;
  border: 1px solid #2a4a80;
  background: #fff;
  display: flex;
  align-items: center;
  justify-content: center;
`;
const IntentMore = styled.div`
  padding-left: 39px;
  height: 22px;
  line-height: 22px;
  letter-spacing: 1.6px;
`;
const IntentFoot = styled.div`
  margin: 3px 2px 0 4px;
  border-top: 1px solid #2a7aa8;
  height: 24px;
  display: flex;
  align-items: center;
  justify-content: flex-end;
  gap: 6px;
  padding-right: 8px;
`;

/* right rail */
const Rail = styled.nav`
  width: 33px;
  flex: none;
  background: linear-gradient(#6e6e6e, #747474);
  padding: 10px 0 0 3px;
  display: flex;
  flex-direction: column;
  align-items: center;
`;
const RailTab = styled.div<{ $h: number; $mt?: number }>`
  width: 30px;
  height: ${p => p.$h}px;
  margin-top: ${p => p.$mt ?? 0}px;
  background: linear-gradient(90deg, #d0d0d0, #c4c4c4);
  border-radius: 4px 0 0 4px;
  display: flex;
  flex-direction: column;
  align-items: center;
  padding-top: 7px;
`;
const RailText = styled.div`
  writing-mode: vertical-rl;
  text-orientation: sideways;
  font-size: 13.5px;
  letter-spacing: 1.1px;
  color: #111;
  white-space: pre;
  margin-top: 5px;
`;
const RailIcon = styled.div<{ $mt: number }>`
  margin-top: ${p => p.$mt}px;
  display: flex;
`;

/* status */
const Status = styled.footer`
  height: 27px;
  flex: none;
  display: flex;
  align-items: center;
  background: linear-gradient(#3c3c3c, #2e2e2e 40%, #3a3a3a);
  border-top: 1px solid #222;
`;
const StatusText = styled.div`
  padding-left: 241px;
  font-size: 13.5px;
  color: #e4e4e4;
  white-space: pre;
  flex: none;
  width: 875px;
`;
const StatusSep = styled.div<{ $ml?: number }>`
  width: 2px;
  height: 21px;
  margin-left: ${p => p.$ml ?? 0}px;
  background: #eee;
  flex: none;
`;
const Search = styled.div`
  width: 176px;
  height: 27px;
  margin-left: 25px;
  background: #fff;
  border-left: 1px solid #777;
  font-size: 14px;
  line-height: 25px;
  padding-left: 3px;
  color: #a0a0a0;
  flex: none;
  letter-spacing: .3px;
`;
const Slider = styled.div`
  width: 144px;
  height: 20px;
  margin-left: 3px;
  flex: none;
  position: relative;
  &::before {
    content: '';
    position: absolute;
    left: 0;
    right: 0;
    top: 11px;
    height: 1px;
    background: #eee;
  }
`;
const Thumb = styled.svg`
  position: absolute;
  left: 20px;
  top: 0;
  width: 16px;
  height: 22px;
`;
const Watermark = styled.div`
  position: absolute;
  left: 1812px;
  top: 980px;
  width: 104px;
  height: 48px;
  pointer-events: none;
  white-space: nowrap;
`;
const WmTop = styled.div`
  display: flex;
  align-items: baseline;
  gap: 7px;
  height: 28px;
  line-height: 28px;
  font-size: 22px;
  font-weight: 700;
  color: rgba(255, 255, 255, .8);
  text-shadow: -1px 0 #bbb, 1px 0 #bbb, 0 -1px #bbb, 0 1px #bbb;
`;
const WmCad = styled.span`
  font-family: "Liberation Sans", sans-serif;
  font-style: italic;
  font-size: 23px;
  font-weight: 400;
`;
const WmBottom = styled.div`
  font-family: "Liberation Sans", sans-serif;
  font-size: 14px;
  line-height: 18px;
  padding-left: 3px;
  color: rgba(215, 215, 215, .85);
`;

/* ---------- data + helpers ---------- */
type Item = { c: number; w?: number; cells?: string[]; kind?: string };
function place<T extends { c: number; w?: number }>(items: T[], start: number) {
  let x = start;
  return items.map(it => {
    const w = it.w ?? 24;
    const ml = it.c - w / 2 - x;
    x = it.c + w / 2;
    return { ...it, w, ml };
  });
}

const tick = (c = '#666') => (
  <CheckSvg viewBox="0 0 10 10"><path d="M1.5 5l2.5 3 4.500-6" stroke={c} strokeWidth="1.500" fill="none" /></CheckSvg>
);

const Cols3 = (c: number, a: string, b: string, d: string): Item => ({ c, cells: [a, b, d] });
const SepC = (c: number): Item => ({ c, w: 2, kind: 'sep' });

const groups: { label: string; x: number; w: number; cols: Item[] }[] = [
  { label: '选择', x: 0, w: 93, cols: [{ c: 34, w: 50, kind: 'select' }, Cols3(72, 'filter', 'selbox', '')] },
  { label: '平面', x: 93, w: 50, cols: [{ ...Cols3(114, 'plane', 'plane2', 'csys'), w: 22 }, { ...Cols3(130, '', 'v', ''), w: 8 }] },
  {
    label: '绘图', x: 143, w: 344, cols: [
      Cols3(162, 'line', 'rect', 'circle'), { ...Cols3(185.5, 'v', 'v', 'v'), w: 10 }, Cols3(204.5, 'arc', 'spline', 'fillet'),
      { ...Cols3(228, 'v', '', 'v'), w: 10 }, Cols3(248, 'trim', 'offsetc', 'extend'), { ...Cols3(271, 'v', '', ''), w: 10 },
      Cols3(290, 'heart', 'move', 'mirror'), { ...Cols3(314, 'v', 'v', 'v'), w: 10 }, SepC(326),
      Cols3(344, 'symm', 'dist', 'pencil'), Cols3(372.5, 'intel', 'curve', 'hatch'), Cols3(402, 'boxcur', '~flash', ''), SepC(421),
      Cols3(439, 'gridtri', 'gridcur', 'xy'), Cols3(468, 'linkcur', 'laxis', 'tablep'),
    ],
  },
  {
    label: '相关', x: 487, w: 166, cols: [
      Cols3(509, 'corner', 'cross', 'tangent'), Cols3(538, 'parallel', 'equal', 'symbr'), Cols3(567, 'concentric', 'perp', 'collin'),
      Cols3(596, 'lock', 'rigid', ''), SepC(614.5), Cols3(633, 'lockdim', '~dimrel', 'faint'),
    ],
  },
  {
    label: '智能草图', x: 653, w: 240, cols: [
      { ...Cols3(669.5, 'c', 'c', 'c'), w: 15 }, { ...Cols3(686, 'sline', 'smid', 'sdown'), w: 18 },
      { ...Cols3(717, 'c', 'c', 'u'), w: 15 }, { ...Cols3(733, 'sdot', 'sx', 'sup'), w: 17 },
      { ...Cols3(765, 'c', 'c', 'u'), w: 15 }, { ...Cols3(783, 'swave', 'sarc', 'spar'), w: 18 },
      { ...Cols3(813, 'c', 'c', 'c'), w: 15 }, { ...Cols3(829, 'sbar', 'sl', 'scirc'), w: 17 },
      SepC(857), Cols3(873.5, 'bulb', 'relbox', '~cross2'),
    ],
  },
  {
    label: '尺寸', x: 893, w: 216, cols: [
      { c: 934, w: 66, kind: 'big' }, { ...Cols3(981, 'dimx', 'angle', 'axial'), w: 24 }, { ...Cols3(1003, '', '', 'v'), w: 10 },
      Cols3(1024, 'dimrr', 'step', '~water'), Cols3(1053, 'dimcur', '', ''), SepC(1072), Cols3(1089.5, 'textu', 'aup', 'adown'),
    ],
  },
  {
    label: '注释', x: 1109, w: 128, cols: [
      Cols3(1130, 'anote', 'bal', 'finish'), Cols3(1160, 'arrowT', 'datum', 'frame'), Cols3(1189, 'boxA', 'a1', 'leader'), Cols3(1218, 'bigA', '', ''),
    ],
  },
  { label: '插入', x: 1237, w: 42, cols: [{ c: 1259, w: 24, kind: 'insert' }] },
];

const qat = place([
  { c: 102, n: 'qnew' }, { c: 126, n: 'v', w: 8 }, { c: 137, n: '|', w: 2 }, { c: 155, n: 'qopen' }, { c: 184, n: 'qfind' },
  { c: 203, n: '|', w: 2 }, { c: 221, n: 'qsave' }, { c: 248, n: 'qsaves' }, { c: 272, n: 'v', w: 8 }, { c: 283, n: '|', w: 2 },
  { c: 299, n: 'qundo' }, { c: 323, n: 'v', w: 8 }, { c: 343, n: 'qredo' }, { c: 365, n: 'v', w: 8 }, { c: 386, n: 'qsteps' },
  { c: 406, n: '|', w: 2 }, { c: 424, n: 'qa' }, { c: 452, n: 'qb' }, { c: 472, n: '|', w: 2 }, { c: 489, n: 'qlist' }, { c: 528, n: 'cust', w: 10 },
], 91);

const tabs = ['主页', '绘制草图', '绘制 3D 草图', '曲面处理', 'PMI', '仿真', '逆向工程', '3D 打印', '检查', '工具', '视图', '数据管理'];

const docBtns = place([
  { c: 1786, w: 16, n: 0 }, { c: 1815.5, w: 16, n: 1 }, { c: 1844.5, w: 16, n: 2 }, { c: 1868, w: 16, n: 3 }, { c: 1889, w: 16, n: 4 }, { c: 1909, w: 16, n: 5 },
], 1774);

const docGlyphs = [
  <><path d="M6 2h8l-1 3H5zM4 6h8l-1 3H3zM2 11h9l-1 3H1z" fill="#2a7ad0" stroke="#e8f2ff" strokeWidth=".7" /></>,
  <><path d="M6 1h9l-1 4H5zM4 4h9l-1 4H3z" fill="#2a7ad0" stroke="#e8f2ff" strokeWidth=".7" /><path d="M1 8h10l-1 7H1z" fill="#f0f6ff" stroke="#2a7ad0" strokeWidth=".7" /></>,
  <><path d="M2 0h12v16H2z" fill="#8a8a8a" stroke="#666" /><path d="M5.500 5c0-3 5-3 5 0 0 2-2.500 2-2.500 4.500M8 11v2.500" stroke="#ccc" strokeWidth="1.600" fill="none" /></>,
  <><path d="M4 11h7v2H4z" fill="#e0e0e0" /></>,
  <><path d="M5 3h9v8h-2M2 6h9v7H2zM2 8h9" fill="none" stroke="#e0e0e0" strokeWidth="1.300" /></>,
  <><path d="M3 3l10 10M13 3L3 13" stroke="#eee" strokeWidth="2.200" /></>,
];

const RibbonCell = ({ v }: { v: string }) => {
  if (!v) return <Cell />;
  if (v === 'v') return <Cell><MiniArrow /></Cell>;
  if (v === 'c') return <Cell><Check>{tick()}</Check></Cell>;
  if (v === 'u') return <Cell><Check /></Cell>;
  if (v[0] === '~') return <Cell><Hi><Ic n={v.slice(1)} s={19} /></Hi></Cell>;
  return <Cell><Ic n={v} s={19} /></Cell>;
};

const RibbonGroup = ({ g }: { g: typeof groups[number] }) => (
  <Group $w={g.w}>
    <GroupBody>
      {place(g.cols, g.x).map((col, i) => (
        <Col key={i} $ml={col.ml} $w={col.w}>
          {col.kind === 'sep' && <RibbonSep />}
          {col.kind === 'select' && (
            <SelectCol>
              <CursorSvg viewBox="0 0 22 38"><path d="M2 1v27l7-7 5 13 6-3-5-12h7z" fill="#fff" stroke="#555" strokeWidth="1.500" /></CursorSvg>
              <SelectText>选择</SelectText>
              <SelectCaret><MiniArrow /></SelectCaret>
            </SelectCol>
          )}
          {col.kind === 'big' && (
            <BigBtn>
              <BigSvg viewBox="0 0 40 36">
                <path d="M7 2v34M33 2v34" stroke="#1c3a5a" strokeWidth="1.400" />
                <path d="M8 15h8M24 15h8" stroke="#2b5aa8" strokeWidth="1.300" />
                <path d="M7 15l6-3v6zM33 15l-6-3v6z" fill="#1c4a8a" />
                <path d="M25 1l-9 17h5l-4 15 13-20h-6l5-12z" fill="#f2cf44" stroke="#b08a20" strokeWidth=".8" />
              </BigSvg>
              智能尺寸
            </BigBtn>
          )}
          {col.kind === 'insert' && (
            <InsertCol><Ic n="bigT" s={24} /><Ic n="picture" s={18} /></InsertCol>
          )}
          {col.cells?.map((v, j) => <RibbonCell key={j} v={v} />)}
        </Col>
      ))}
    </GroupBody>
    <GroupLabel>{g.label}</GroupLabel>
  </Group>
);

const treeTick = <CheckSvg viewBox="0 0 10 10"><path d="M1 5l3 3.500L9 1.500" stroke="#1c2f4a" strokeWidth="2" fill="none" /></CheckSvg>;

const TreeNode = ({ x, exp, chk, icon, w, text, bold, dim, top }: {
  x: number; exp?: '+' | '-'; chk?: 'on' | 'off'; icon: string | string[]; w: number; text: string; bold?: boolean; dim?: boolean; top?: boolean;
}) => (
  <Row $x={x} $top={top}>
    {exp !== undefined || chk !== undefined ? (
      <>
        <ExpSlot>{exp === '+' ? <Plus /> : exp === '-' ? <Expander /> : null}</ExpSlot>
        <ChkSlot>{chk === 'on' ? <TreeCheck>{treeTick}</TreeCheck> : chk === 'off' ? <TreeCheck $empty /> : null}</ChkSlot>
      </>
    ) : null}
    <Chip $w={w} $bold={bold} $dim={dim}>
      {(Array.isArray(icon) ? icon : [icon]).map(n => <Ic key={n} n={n} s={17} />)}
      {text}
    </Chip>
  </Row>
);

const intentItems = ['对称', '同心', '偏置', '对齐孔', '共面'];
const intentTick = <CheckSvg viewBox="0 0 10 10"><path d="M2 5l2.200 3L8.500 1.500" stroke="#3a64c0" strokeWidth="1.600" fill="none" /></CheckSvg>;

const status = place([
  { c: 1425, n: 'stArrow' }, { c: 1455, n: 'stFit' }, { c: 1484, n: 'stZoom' }, { c: 1512, n: 'stArea' }, { c: 1539, n: 'stPan' },
  { c: 1568, n: 'stOrbit' }, { c: 1595, n: 'stView' }, { c: 1623, n: 'stLayer' }, { c: 1652, n: 'stColor' },
], 1412);

export default function App() {
  return (
    <Page>
      <Global />
      <Header>
        <LogoCell>
          <LogoSvg viewBox="0 0 38 38">
            <defs>
              <linearGradient id="lg" x1="0" y1="0" x2="1" y2="1"><stop offset="0" stopColor="#19d0f0" /><stop offset="1" stopColor="#0a58c8" /></linearGradient>
            </defs>
            <rect x=".8" y=".8" width="36.4" height="36.4" rx="4" fill="#fff" stroke="#2a78c8" strokeWidth="1.400" />
            <path d="M32 8H18C10 8 6 14 5 21c-1 7 4 10 10 10h9l3-12H14" fill="none" stroke="url(#lg)" strokeWidth="5.400" />
          </LogoSvg>
        </LogoCell>
        <HeaderMain>
          <TopRow>
            <Qat>
              {qat.map((q, i) => (
                <Slot key={i} $ml={q.ml} $w={q.w}>
                  {q.n === '|' ? <QatSep /> : q.n === 'v' ? <MiniArrow /> : q.n === 'cust' ? <CustomizeArrow /> : <Ic n={q.n} />}
                </Slot>
              ))}
            </Qat>
            <Title>浩辰3D 2020 - 快速建模零件 - [零件1]</Title>
            <WinButtons>
              <WinSvg viewBox="0 0 16 16"><path d="M2 9h12v3H2z" fill="#ddd" stroke="#999" strokeWidth=".6" /></WinSvg>
              <WinSvg viewBox="0 0 16 16"><path d="M6 2h8v8h-3M2 6h8v8H2zM4.500 9.500h3v2h-3z" fill="none" stroke="#ddd" strokeWidth="1.600" /></WinSvg>
              <WinSvg viewBox="0 0 16 16"><path d="M3 2l10 11M13 2L3 13" stroke="#ddd" strokeWidth="2.600" /></WinSvg>
            </WinButtons>
          </TopRow>
          <TabRow>
            {tabs.map((t, i) => <Tab key={t} $on={i === 1}>{t}</Tab>)}
            <DocButtons>
              {docBtns.map(b => (
                <Slot key={b.n} $ml={b.ml} $w={b.w}><WinSvg viewBox="0 0 16 16">{docGlyphs[b.n]}</WinSvg></Slot>
              ))}
            </DocButtons>
          </TabRow>
        </HeaderMain>
      </Header>

      <Ribbon>
        {groups.map(g => <RibbonGroup key={g.label} g={g} />)}
      </Ribbon>

      <Middle>
        <Work>
          <DocStrip>
            <DocTab>
              <Svg $s={20} viewBox="0 0 24 24"><path d="M4 8l8-6 6 5v7l5 3-6 6-7-3V12z" fill="#3d8fe0" stroke="#2a70c0" /></Svg>
              零件1
              <DocClose>✕</DocClose>
            </DocTab>
            <DocRight>
              <WinSvg viewBox="0 0 16 16"><path d="M10 3L6 8l4 5z" fill="none" stroke="#c8d0d8" strokeWidth="1.500" /></WinSvg>
              <WinSvg viewBox="0 0 16 16"><path d="M6 3l4 5-4 5z" fill="none" stroke="#a8c0d0" strokeWidth="1.500" /></WinSvg>
              <WinSvg viewBox="0 0 16 16"><path d="M3 6h10l-5 6z" fill="#dcdcdc" /></WinSvg>
              <WinSvg viewBox="0 0 16 16"><path d="M2 2l12 12M14 2L2 14" stroke="#eee" strokeWidth="2.400" /></WinSvg>
            </DocRight>
          </DocStrip>
          <Frame>
            <Canvas>
              <Scene viewBox="5 213 1877 782">
                <defs>
                  <linearGradient id="pl" gradientUnits="userSpaceOnUse" x1="745" y1="425" x2="768" y2="414">
                    <stop offset="0" stopColor="#b4ccd6" /><stop offset="1" stopColor="#9aa2aa" />
                  </linearGradient>
                </defs>
                <polygon points="360.7,513.3 666.7,492.7 736.7,649.3 431.7,670" fill="#e3f6fb" stroke="#1a6fb8" strokeWidth="2" />
                <path d="M580 583V552" stroke="#0a9a10" strokeWidth="3" />
                <path d="M580.700 531.700l-4.500 18h9z" fill="#10b020" />
                <path d="M580 583l38-3" stroke="#d01818" strokeWidth="3" />
                <path d="M637.700 579.300l-19-4.500 1 9z" fill="#e03020" />
                <path d="M581 584l7 14" stroke="#1010c0" strokeWidth="4" />
                <path d="M590 607l-7-6 5-7 4 5z" fill="#1010c0" />
                <circle cx="580" cy="583.500" r="6" fill="#e8d020" />
                <text x="581" y="524" fontSize="14" fill="#10c030" textAnchor="middle" fontFamily="Liberation Sans">Y</text>
                <text x="649.500" y="584" fontSize="14" fill="#d01818" textAnchor="middle" fontFamily="Liberation Sans">X</text>
                <text x="592.500" y="618" fontSize="14" fill="#1010c0" textAnchor="middle" fontFamily="Liberation Sans">Z</text>

                <polygon points="744.300,422.300 1113,398 1186.700,556 816.700,581" fill="url(#pl)" stroke="#50565c" strokeWidth="1" />
                <path d="M744.300 422.300L817 581" stroke="#a4eefa" strokeWidth="3" />
                <polygon points="816.700,581 1186.700,556 1187,561 816.700,586" fill="#c0c4cc" stroke="#4a4e54" strokeWidth="1" />
                <path d="M816.500 586v29M1186.500 558v30" stroke="#22cc44" strokeWidth="1" />
                <path d="M817 606l128-8M1059 589.300l122-8" stroke="#22cc44" strokeWidth="1" />
                <path d="M820 605l14-5 1 3 21-2v4l-21 2 0 4z" fill="#e0186a" />
                <path d="M1167 578l14 3-14 5z" fill="#22cc44" />
                <circle cx="1186.700" cy="580.700" r="5" fill="#d80a60" />
                <text x="1002" y="595" fontSize="27" fill="#22cc44" textAnchor="middle" dominantBaseline="middle" fontFamily="Liberation Sans" transform="rotate(-3.500 1002 595)">1607,18</text>
                <g fill="none" stroke="#1a6fd0" strokeWidth="3">
                  <circle cx="1114" cy="393" r="6.500" />
                  <path d="M1118 403h-4a6 6 0 0 0 0 12h6M1106 399h21M1120 384v9M1120 402v13" />
                </g>

                <g stroke="#cfcfcf" strokeWidth="1" fill="none">
                  <path d="M1766 877l59-3 16.700 21.700-71 1zM1770.700 897.700l3.300 62.300 64-5 3.700-59.300" />
                </g>
                <path d="M1800.700 915v-28" stroke="#8ce09a" strokeWidth="2" />
                <path d="M1800.700 915l30-2" stroke="#f09aa0" strokeWidth="2" />
                <path d="M1801 915l7 13" stroke="#9a9ae0" strokeWidth="2" />
                <circle cx="1800.700" cy="915" r="3" fill="#d8c040" />
                <text x="1807" y="934" fontSize="14" fill="#777" textAnchor="middle" fontFamily="Liberation Serif">TOP</text>
                <text x="1801" y="889" fontSize="6" fill="#999" textAnchor="middle" fontFamily="Liberation Serif">NORTH</text>
              </Scene>

              <TreePane>
                <Grip><GripDots /></Grip>
                <TreeList>
                  <TreeNode x={6} icon={['tPart', 'tLock']} w={93} text="零件1" top />
                  <TreeNode x={19} exp="+" chk="on" icon="tPmi" w={57} text="PMI" />
                  <TreeNode x={19} chk="on" icon="tBase" w={63} text="Base" />
                  <Row $x={63}><Chip $w={94}><Ic n="tMat" s={17} />材料 (无)</Chip></Row>
                  <TreeNode x={19} exp="+" chk="off" icon="tRef" w={128} text="基本参考平面" dim />
                  <TreeNode x={19} exp="-" chk="on" icon="tBody" w={80} text="设计体" />
                  <TreeNode x={48} chk="on" icon="tBody1" w={94} text="设计体_1" />
                  <Row $x={19}>
                    <ExpSlot><Expander /></ExpSlot>
                    <SyncBar>
                      <svg width="14" height="14" viewBox="0 0 14 14"><path d="M3 1v6h3v6M11 1v6H8v6M2 7h10" stroke="#fff" strokeWidth="2" fill="none" /></svg>
                      快速建模
                      <SyncEnd viewBox="0 0 24 14"><path d="M1 7l22-6v12z" fill="#fff4dc" /></SyncEnd>
                    </SyncBar>
                  </Row>
                  <TreeNode x={48} exp="-" icon="tFeat" w={66} text="特征" bold />
                  <Row $x={115}><Chip $w={79} $bold><Ic n="tExt" s={17} />拉伸 1</Chip></Row>
                  <TreeNode x={48} exp="+" chk="on" icon="tSketch" w={66} text="草图" bold />
                  <TreeNode x={48} exp="+" icon="tSketch" w={117} text="使用的草图" bold />
                </TreeList>
              </TreePane>

              <CommandBar>
                <CmdMain>
                  <Svg $s={36} viewBox="0 0 36 36"><path d="M4 12v20M31 12v20M5 22h25" stroke="#1c3a5a" strokeWidth="1.500" /><path d="M5 22l5-3v6zM30 22l-5-3v6z" fill="#1c4a8a" /><path d="M16 19l2-6 9-9 3 3-9 9z" fill="#e8c060" stroke="#6a5020" /><circle cx="29" cy="4" r="2.500" fill="#e0308a" /></Svg>
                </CmdMain>
                <CmdSplit>
                  <CmdFace><Svg $s={28} viewBox="0 0 28 28"><path d="M14 2v7" stroke="#c85a10" strokeWidth="2" /><path d="M10 5l4-4 4 4z" fill="#c85a10" /><path d="M14 8L4 18M14 8l10 10" stroke="#1c3a5a" strokeWidth="1.500" /><path d="M7 16h14" stroke="#20b040" strokeWidth="3" /><path d="M4 18v7M24 18v7" stroke="#1c3a5a" strokeWidth="1.500" /></Svg></CmdFace>
                  <CmdDrop><DropTri /></CmdDrop>
                </CmdSplit>
                <CmdSplit>
                  <CmdFace><Svg $s={28} viewBox="0 0 28 28"><path d="M3 3h20v9h-9v11H3z" fill="#f8f8e8" stroke="#1c6a5a" strokeWidth="1.500" /><path d="M5 5h9v5H5z" fill="#3ac070" /><path d="M9 8h10M16 5l4 3-4 3z" stroke="#c85a10" fill="#c85a10" /><path d="M14 15h11v9" fill="none" stroke="#1c5a8a" strokeWidth="1.500" /></Svg></CmdFace>
                  <CmdDrop><DropTri /></CmdDrop>
                </CmdSplit>
              </CommandBar>

              <RedBox />
              <Popup>
                <PopHead><PopDots /></PopHead>
                <PopRow>
                  <PopInput>1600<Caret /></PopInput>
                  <LockBtn><Ic n="tLock" s={18} /></LockBtn>
                </PopRow>
                <ArrowRow>
                  <ArrowBtn $w={43} $on><ArrowSvg $w={16} viewBox="0 0 16 14"><path d="M1 7l7-6v3.500h7v5H8V13z" fill="#9ae07a" stroke="#1a7a20" /></ArrowSvg></ArrowBtn>
                  <ArrowBtn $w={45}><ArrowSvg $w={24} viewBox="0 0 24 14"><path d="M1 7l6-6v3.500h10V1l6 6-6 6V9.500H7V13z" fill="#9ae07a" stroke="#1a7a20" /></ArrowSvg></ArrowBtn>
                  <ArrowBtn $w={43}><ArrowSvg $w={16} viewBox="0 0 16 14"><path d="M15 7L8 1v3.500H1v5h7V13z" fill="#9ae07a" stroke="#1a7a20" /></ArrowSvg></ArrowBtn>
                </ArrowRow>
              </Popup>

              <Intent>
                <IntentHead>
                  <IntentBtn>?</IntentBtn>
                  <IntentBtn><svg width="10" height="10" viewBox="0 0 10 10"><path d="M1 1l8 4-8 4z" fill="#2a5a9a" /></svg></IntentBtn>
                  <IntentBtn $right><svg width="12" height="12" viewBox="0 0 12 12"><path d="M4 1h4v7H4zM1 10h10" fill="#2a5a8a" stroke="#1c3a5a" strokeWidth="1.400" /></svg></IntentBtn>
                </IntentHead>
                <IntentBody>
                  <IntentRow $x={6} $gap={9}><IntentChk>{intentTick}</IntentChk>设计意图</IntentRow>
                  {intentItems.map(t => (
                    <IntentRow key={t} $x={18} $gap={9}><IntentChk>{intentTick}</IntentChk>{t}</IntentRow>
                  ))}
                  <IntentMore>高级...</IntentMore>
                </IntentBody>
                <IntentFoot>
                  隐藏详细信息
                  <IntentBtn><svg width="12" height="12" viewBox="0 0 12 12"><path d="M2 6l4-4 4 4M2 10l4-4 4 4" stroke="#2a5a8a" strokeWidth="1.400" fill="none" /></svg></IntentBtn>
                </IntentFoot>
              </Intent>
              <BottomEdge />
            </Canvas>
          </Frame>
        </Work>
        <Rail>
          <RailTab $h={162}>
            <Svg $s={21} viewBox="0 0 24 24"><circle cx="12" cy="12" r="11" fill="#2a70c8" stroke="#1c4a8a" /><text x="12" y="18" fontSize="17" fontWeight="700" fill="#fff" textAnchor="middle" fontFamily="Liberation Sans">?</text></Svg>
            <RailText>学习  浩辰3D  2020</RailText>
          </RailTab>
          <RailTab $h={112} $mt={20}>
            <Svg $s={24} viewBox="0 0 24 24"><path d="M3 7h19v15H3z" fill="#cfe0f4" stroke="#1c4a8a" /><path d="M1 3h19v14H1z" fill="#eef4fb" stroke="#1c4a8a" /><path d="M4 14l6-8" stroke="#d82020" strokeWidth="1.800" /><circle cx="10" cy="12" r="2.500" fill="#2aa040" /><path d="M14 5h4v4h-4z" fill="#7ab0e0" /></Svg>
            <RailText>图层</RailText>
          </RailTab>
          <RailIcon $mt={8}><Svg $s={24} viewBox="0 0 24 24"><path d="M1 1h22v21H1z" fill="#e8eef5" stroke="#1c3a6a" strokeWidth="1.400" /><path d="M3 3h5v8H3z" fill="#d86a5a" /><path d="M9 3h5v6H9z" fill="#5ab86a" /><path d="M15 3h6v8h-6z" fill="#d8a0a0" /><path d="M3 20a9 9 0 0 1 18 0z" fill="#fff" stroke="#667" /><path d="M7 9l9 11" stroke="#d81818" strokeWidth="2" /></Svg></RailIcon>
          <RailIcon $mt={17}><Svg $s={24} viewBox="0 0 24 24"><path d="M1 2h22v20H1z" fill="#e4eefa" stroke="#1c4a8a" strokeWidth="1.400" /><circle cx="12" cy="10" r="5" fill="#fff" stroke="#667" /><path d="M10 7l5 3-5 3z" fill="#222" /><path d="M3 19h18" stroke="#3a70c0" strokeWidth="2" /></Svg></RailIcon>
          <RailIcon $mt={17}>
            <Svg $s={22} viewBox="0 0 24 24">
              <defs><radialGradient id="hm" cx=".1" cy=".9" r="1.100"><stop offset="0" stopColor="#e01010" /><stop offset=".3" stopColor="#f4d020" /><stop offset=".6" stopColor="#a060b0" /><stop offset="1" stopColor="#3a30a0" /></radialGradient></defs>
              <path d="M2 2h20v20H2z" fill="url(#hm)" stroke="#1c3a7a" />
            </Svg>
          </RailIcon>
          <RailIcon $mt={19}><Svg $s={22} viewBox="0 0 24 24"><path d="M6 19L17 8" stroke="#e8c030" strokeWidth="4" /><circle cx="17" cy="7" r="5" fill="none" stroke="#f0c818" strokeWidth="3" /><circle cx="5" cy="20" r="3" fill="#d8a818" /></Svg></RailIcon>
        </Rail>
      </Middle>

      <Status>
        <StatusText>单击要标注尺寸的元素或按 't' 相切。  按 "i" 可切换交点。</StatusText>
        <StatusSep />
        <StatusSep $ml={331} />
        <Search>查找命令</Search>
        {status.map(s => <Slot key={s.n} $ml={s.ml} $w={s.w}><Ic n={s.n} s={21} /></Slot>)}
        <StatusSep $ml={4} />
        <Slot $ml={0} $w={20}><Ic n="stMinus" s={20} /></Slot>
        <Slider>
          <Thumb viewBox="0 0 16 22"><path d="M2 1h12v14l-6 6-6-6z" fill="#8aa8d0" stroke="#d8e4f4" /><path d="M8 4v8" stroke="#eef" /></Thumb>
        </Slider>
        <Slot $ml={0} $w={20}><Ic n="stPlus" s={20} /></Slot>
        <StatusSep $ml={2} />
        <Slot $ml={3} $w={22}><Ic n="stRec" s={22} /></Slot>
        <StatusSep $ml={3} />
        <Slot $ml={4} $w={22}><Ic n="stUp" s={22} /></Slot>
      </Status>
      <Watermark>
        <WmTop>晓东<WmCad>CAD</WmCad></WmTop>
        <WmBottom>www.dcad.net</WmBottom>
      </Watermark>
    </Page>
  );
}
